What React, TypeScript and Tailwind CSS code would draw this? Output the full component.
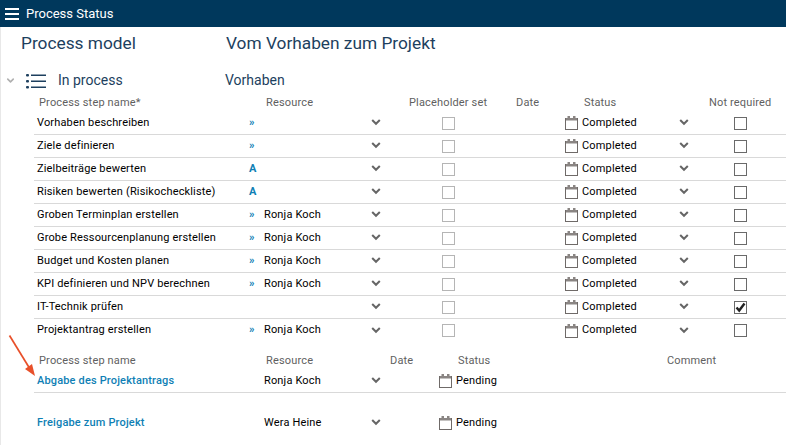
import { ChevronDown } from 'lucide-react';

const STEPS = [
  { name: 'Vorhaben beschreiben', mark: '»', resource: '' },
  { name: 'Ziele definieren', mark: '»', resource: '' },
  { name: 'Zielbeiträge bewerten', mark: 'A', resource: '' },
  { name: 'Risiken bewerten (Risikocheckliste)', mark: 'A', resource: '' },
  { name: 'Groben Terminplan erstellen', mark: '»', resource: 'Ronja Koch' },
  { name: 'Grobe Ressourcenplanung erstellen', mark: '»', resource: 'Ronja Koch' },
  { name: 'Budget und Kosten planen', mark: '»', resource: 'Ronja Koch' },
  { name: 'KPI definieren und NPV berechnen', mark: '»', resource: 'Ronja Koch' },
  { name: 'IT-Technik prüfen', mark: '', resource: '', checked: true },
  { name: 'Projektantrag erstellen', mark: '»', resource: 'Ronja Koch' },
];

const PENDING = [
  { name: 'Abgabe des Projektantrags', resource: 'Ronja Koch', line: true },
  { name: 'Freigabe zum Projekt', resource: 'Wera Heine', line: false },
];

function CalendarIcon() {
  return (
    <svg width="13" height="14" viewBox="0 0 13 14" className="shrink-0">
      <rect x="0.5" y="2.5" width="12" height="11" fill="#fff" stroke="#6f6a68" />
      <rect x="1" y="2" width="11" height="2.5" fill="#8a8583" />
      <rect x="2.5" y="0" width="2.5" height="2.5" fill="#8a8583" />
      <rect x="8" y="0" width="2.5" height="2.5" fill="#8a8583" />
    </svg>
  );
}

function Chevron() {
  return (
    <svg width="12" height="8" viewBox="0 0 12 8" className="shrink-0">
      <path d="M2.2 1 L6 4.8 L9.8 1" fill="none" stroke="#666" strokeWidth="2" />
    </svg>
  );
}

export default function App() {
  return (
    <div className="relative h-[445px] w-[786px] overflow-hidden bg-white font-['Roboto',sans-serif] text-[11px] tracking-[0.16px] shadow-[inset_1px_0_0_#e8e8e8]">
      {/* Title bar */}
      <div className="flex h-[27px] items-center bg-[#00385c] pl-[5px] text-white">
        <svg width="14" height="12" viewBox="0 0 14 12">
          <rect y="0" width="14" height="2" fill="#fff" />
          <rect y="5" width="14" height="2" fill="#fff" />
          <rect y="10" width="14" height="2" fill="#fff" />
        </svg>
        <span className="ml-[7px] text-[13px] tracking-normal">Process Status</span>
      </div>

      {/* Heading */}
      <div className="flex h-[34px] items-center pl-[21px] text-[17.3px] tracking-normal text-[#1d3f5e]">
        <span className="w-[205px]">Process model</span>
        <span>Vom Vorhaben zum Projekt</span>
      </div>

      {/* Section */}
      <div className="mt-[6px] flex h-[27px] items-center pl-[5px] text-[14px] tracking-normal text-[#1d3f5e]">
        <ChevronDown size={11} strokeWidth={3.5} className="text-[#b0b0b0]" />
        <svg width="20" height="16" viewBox="0 0 20 16" className="ml-[10px]">
          <rect x="0" y="1" width="3" height="2.5" rx="1" fill="#1d3f5e" />
          <rect x="0" y="7" width="3" height="2.5" rx="1" fill="#1d3f5e" />
          <rect x="0" y="13" width="3" height="2.5" rx="1" fill="#1d3f5e" />
          <rect x="5" y="1.5" width="15" height="1.5" fill="#1d3f5e" />
          <rect x="5" y="7.5" width="15" height="1.5" fill="#1d3f5e" />
          <rect x="5" y="13.5" width="15" height="1.5" fill="#1d3f5e" />
        </svg>
        <span className="ml-[12px] w-[167px]">In process</span>
        <span>Vorhaben</span>
      </div>

      {/* Open steps */}
      <div className="mt-[1px] flex h-[17px] items-center pl-[39px] text-[#5f5f5f]">
        <span className="w-[227px]">Process step name*</span>
        <span className="w-[143px]">Resource</span>
        <span className="w-[107px]">Placeholder set</span>
        <span className="w-[68px]">Date</span>
        <span className="w-[125px]">Status</span>
        <span>Not required</span>
      </div>
      <div className="ml-[34px]">
        {STEPS.map((step, i) => (
          <div
            key={step.name}
            className={`flex h-[23px] items-center ${i < STEPS.length - 1 ? 'border-b border-[#d9d9d9]' : ''}`}
          >
            <span className="w-[215px] pl-[3px] text-black">{step.name}</span>
            <span className="w-[15px] font-bold text-[#0f7fb5]">{step.mark}</span>
            <span className="w-[106px] text-black">{step.resource}</span>
            <Chevron />
            <span className="ml-[60px] size-[13px] border border-[#b5b5b5]" />
            <span className="ml-[110px] flex"><CalendarIcon /></span>
            <span className="ml-[4px] w-[96px] text-black">Completed</span>
            <Chevron />
            <span className="ml-[44px] flex size-[13px] items-center justify-center border border-[#6a6a6a]">
              {step.checked && (
                <svg width="11" height="11" viewBox="0 0 11 11">
                  <path d="M1.5 5.5 L4.2 8.5 L9.5 1.5" fill="none" stroke="#222" strokeWidth="2.4" />
                </svg>
              )}
            </span>
          </div>
        ))}
      </div>

      {/* Pending steps */}
      <div className="mt-[11px] flex h-[17px] items-center pl-[39px] text-[#5f5f5f]">
        <span className="w-[227px]">Process step name</span>
        <span className="w-[124px]">Resource</span>
        <span className="w-[68px]">Date</span>
        <span className="w-[209px]">Status</span>
        <span>Comment</span>
      </div>
      <div className="ml-[34px]">
        {PENDING.map((row) => (
          <div
            key={row.name}
            className={`flex items-center ${row.line ? 'mb-[18px] h-[23px] border-b border-[#d9d9d9]' : 'h-[24px]'}`}
          >
            <span className="w-[230px] pl-[3px] font-medium text-[#0f7fb5]">{row.name}</span>
            <span className="w-[106px] text-black">{row.resource}</span>
            <Chevron />
            <span className="ml-[57px] flex"><CalendarIcon /></span>
            <span className="ml-[4px] text-black">Pending</span>
          </div>
        ))}
      </div>

      {/* Annotation arrow */}
      <svg width="30" height="46" viewBox="0 0 30 46" className="absolute left-[7px] top-[333px]">
        <line x1="2.5" y1="2.5" x2="23" y2="36" stroke="#e8502a" strokeWidth="1.7" />
        <polygon points="28,43 18,36 25,31" fill="#e8502a" />
      </svg>
    </div>
  );
}
